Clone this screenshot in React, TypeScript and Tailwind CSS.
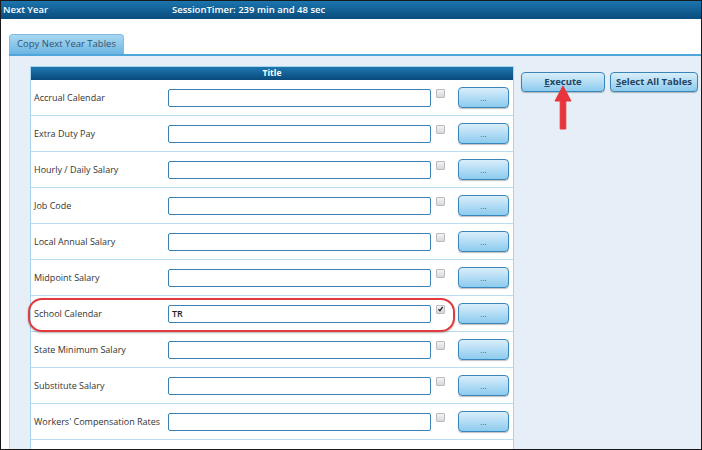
import React from "react";

const rows = [
  { label: "Accrual Calendar", value: "", checked: false },
  { label: "Extra Duty Pay", value: "", checked: false },
  { label: "Hourly / Daily Salary", value: "", checked: false },
  { label: "Job Code", value: "", checked: false },
  { label: "Local Annual Salary", value: "", checked: false },
  { label: "Midpoint Salary", value: "", checked: false },
  { label: "School Calendar", value: "TR", checked: true },
  { label: "State Minimum Salary", value: "", checked: false },
  { label: "Substitute Salary", value: "", checked: false },
  { label: "Workers' Compensation Rates", value: "", checked: false },
  { label: "", value: "", checked: false },
];

function Checkbox({ checked }: { checked: boolean }) {
  return (
    <div className="w-[9px] h-[9px] border border-[#b8bcc0] rounded-[1px] bg-gradient-to-b from-[#f4f4f4] to-[#d8d8d8] flex items-center justify-center">
      {checked && (
        <svg viewBox="0 0 10 10" className="w-[8px] h-[8px]">
          <path d="M2 5.2 L4.2 7.4 L8.2 2" stroke="#222" strokeWidth="1.8" fill="none" />
        </svg>
      )}
    </div>
  );
}

function TableRow({ label, value, checked }: { label: string; value: string; checked: boolean }) {
  return (
    <div className="h-[36px] flex items-center border-b border-[#b9dcf1]">
      <div className="w-[137px] pl-[3px] text-[9px] text-[#333] whitespace-nowrap">{label}</div>
      {label && (
        <>
          <div className="w-[263px] h-[18px] border border-[#3b82b4] rounded-[2px] bg-white flex items-center pl-[3px] text-[9px] font-semibold text-[#222]">
            {value}
          </div>
          <div className="ml-[5px] -mt-[9px]">
            <Checkbox checked={checked} />
          </div>
          <button className="ml-[13px] w-[51px] h-[21px] rounded-[4px] border border-[#3a86ba] bg-gradient-to-b from-[#d9eefa] to-[#8ccbee] shadow-[0_1px_1px_rgba(0,0,0,0.25)] text-[8px] text-[#3a5a78] leading-none">
            ...
          </button>
        </>
      )}
    </div>
  );
}

function ActionButton({ first, rest, width }: { first: string; rest: string; width: string }) {
  return (
    <button
      className={`${width} h-[20px] rounded-[4px] border border-[#3a86ba] bg-gradient-to-b from-[#d9eefa] to-[#8ccbee] shadow-[0_1px_1px_rgba(0,0,0,0.25)] text-[9.5px] font-bold text-[#234563]`}
    >
      <span className="underline">{first}</span>
      {rest}
    </button>
  );
}

export default function App() {
  return (
    <div
      className="relative w-[702px] h-[450px] overflow-hidden bg-white border border-[#1a1a1a]"
      style={{ fontFamily: '"Open Sans", "Liberation Sans", sans-serif' }}
    >
      {/* header bar */}
      <div className="h-[18px] flex items-center bg-gradient-to-b from-[#1b75ad] to-[#0a4c7e] text-white text-[9.5px] font-semibold">
        <span className="w-[171px] pl-[2px]">Next Year</span>
        <span>SessionTimer: 239 min and 48 sec</span>
      </div>

      <div className="h-[15px]" />

      {/* tab */}
      <div className="pl-[8px] flex">
        <div className="w-[115px] h-[20px] rounded-t-[4px] border border-b-0 border-[#7dbde3] bg-gradient-to-b from-[#a9d8f1] to-[#6ab6e2] flex items-center justify-center text-[9.5px] text-[#34526d]">
          Copy Next Year Tables
        </div>
      </div>

      <div className="ml-[8px] h-[2px] bg-[#4fa6da]" />

      {/* panel */}
      <div className="ml-[8px] h-[400px] bg-[#e6eef7] border-l border-[#c4d9ec] flex pl-[20px] pt-[10px]">
        <div className="w-[484px] self-start border border-[#a6d3ee] bg-white">
          <div className="h-[13px] bg-gradient-to-b from-[#1d78b0] to-[#094a7b] flex items-center justify-center text-white text-[8.5px] font-bold">
            Title
          </div>
          {rows.map((r, i) => (
            <TableRow key={i} {...r} />
          ))}
        </div>

        <div className="ml-[7px] mt-[6px] flex gap-[5px] self-start">
          <ActionButton first="E" rest="xecute" width="w-[84px]" />
          <ActionButton first="S" rest="elect All Tables" width="w-[88px]" />
        </div>
      </div>

      {/* red highlight around School Calendar */}
      <div className="absolute left-[27px] top-[297px] w-[427px] h-[34px] rounded-[14px] border-2 border-[#e0393e] shadow-[0_1px_2px_rgba(0,0,0,0.3)]" />

      {/* red arrow */}
      <svg className="absolute left-[552px] top-[84px]" width="20" height="46" viewBox="0 0 20 46">
        <path d="M10 1 L18 16 L12.8 16 L12.8 44 L7.2 44 L7.2 16 L2 16 Z" fill="#e8353c" stroke="#e8353c" strokeWidth="1" strokeLinejoin="round" />
      </svg>
    </div>
  );
}
